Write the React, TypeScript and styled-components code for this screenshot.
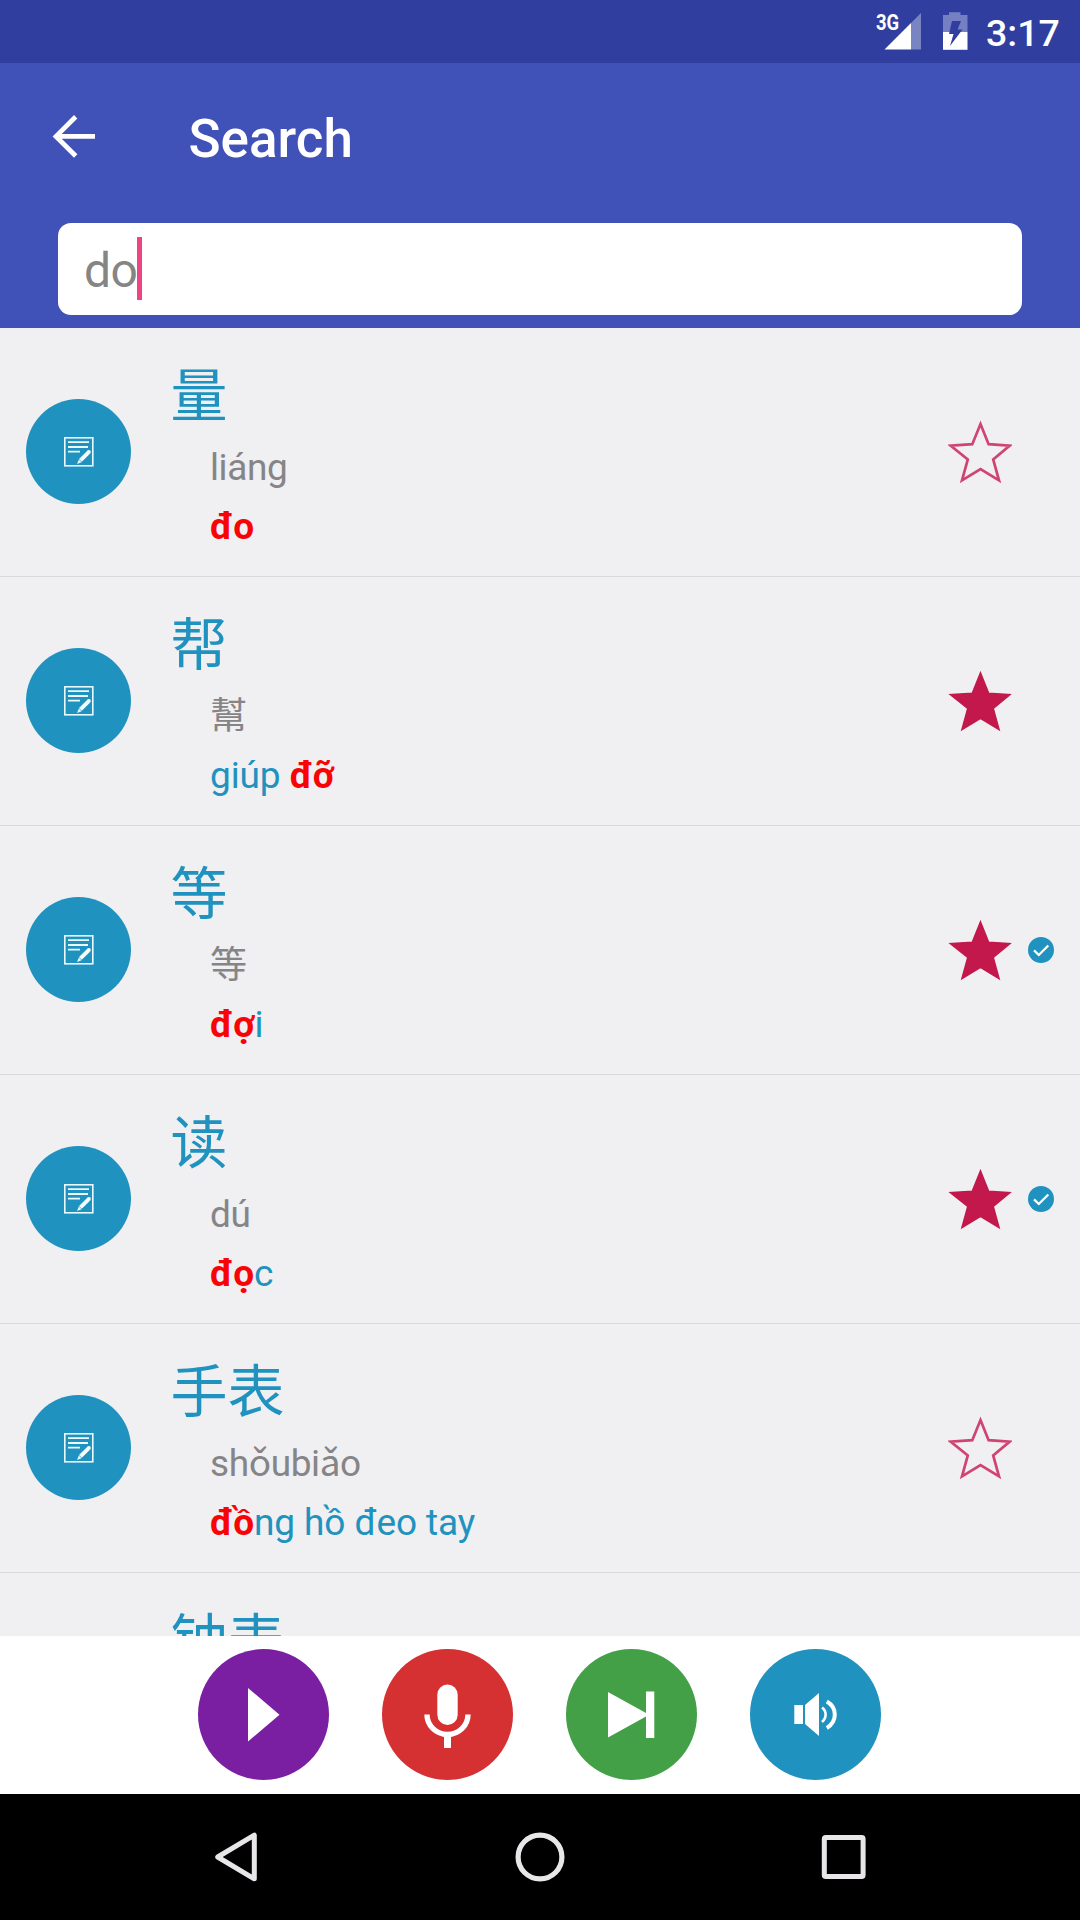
import React from "react";
import styled, { createGlobalStyle } from "styled-components";

const BLUE = "#2092bf";
const CRIMSON = "#c2184b";

const GlobalStyle = createGlobalStyle`
  * { box-sizing: border-box; }
  body { margin: 0; background: #000; }
`;

const Screen = styled.div`
  width: 1080px;
  height: 1920px;
  display: flex;
  flex-direction: column;
  overflow: hidden;
  background: #f0eff1;
  font-family: Roboto, "Noto Sans CJK SC", sans-serif;
`;

const StatusBar = styled.div`
  flex: none;
  height: 63px;
  display: flex;
  align-items: flex-start;
  justify-content: flex-end;
  padding: 12px 21px 0 0;
  background: #303f9f;
  color: #fff;
`;

const Network = styled.span`
  width: 23px;
  margin-right: -15px;
  font-size: 22.5px;
  font-weight: 700;
  line-height: 20px;
  transform: scaleX(0.82);
  transform-origin: 0 0;
`;

const BatteryIcon = styled.svg`
  margin: 0 18px 0 21px;
`;

const Clock = styled.span`
  width: 73px;
  font-size: 37.5px;
  font-weight: 500;
  line-height: 43px;
`;

const Header = styled.header`
  flex: none;
  height: 265px;
  background: #4051b7;
`;

const Toolbar = styled.div`
  height: 160px;
  display: flex;
  align-items: center;
  padding: 0 0 15px 52px;
`;

const Title = styled.h1`
  margin: 6px 0 0 92.5px;
  color: #fff;
  font-size: 53px;
  line-height: 60px;
  font-weight: 500;
`;

const SearchField = styled.div`
  height: 92px;
  margin: 0 58px;
  padding: 0 0 0 26px;
  display: flex;
  align-items: center;
  border-radius: 13px;
  background: #fff;
  color: #858585;
  font-size: 48px;
  letter-spacing: -0.5px;
  line-height: 60px;
`;

const Query = styled.span`
  padding-top: 4px;
`;

const Caret = styled.i`
  width: 5px;
  height: 63px;
  margin-bottom: 1px;
  background: #ee4484;
`;

const List = styled.main`
  flex: none;
  height: 1308px;
  overflow: hidden;
`;

const Row = styled.section`
  height: 249px;
  display: flex;
  align-items: center;
  padding: 0 0 1px 26px;
  border-bottom: 1px solid #d9d8da;
`;

const Circle = styled.span<{ $size: number; $color: string }>`
  flex: none;
  width: ${(p) => p.$size}px;
  height: ${(p) => p.$size}px;
  display: flex;
  align-items: center;
  justify-content: center;
  border-radius: 50%;
  background: ${(p) => p.$color};
`;

const Word = styled.div`
  flex: 1;
  align-self: flex-start;
  padding: 23px 0 0 39.5px;
`;

const Hanzi = styled.div`
  height: 87px;
  font-family: "Noto Sans CJK SC", sans-serif;
  font-size: 57px;
  line-height: 80px;
  color: ${BLUE};
`;

const Line = styled.div<{ $color: string; $spacing: number }>`
  height: 59px;
  padding-left: 39.5px;
  font-size: 37px;
  letter-spacing: ${(p) => p.$spacing}px;
  line-height: 59px;
  color: ${(p) => p.$color};
`;

const Match = styled.b`
  color: #f80406;
  font-weight: 700;
`;

const Marks = styled.div`
  width: 132px;
  display: flex;
  align-items: center;
`;

const CheckSlot = styled.span`
  display: flex;
  margin-left: 16px;
`;

const Player = styled.footer`
  flex: none;
  height: 158px;
  display: flex;
  gap: 53px;
  padding: 13px 0 0 198px;
  background: #fff;
`;

const NavBar = styled.nav`
  flex: none;
  height: 126px;
  display: flex;
  align-items: center;
  justify-content: space-between;
  padding: 0 213px;
  background: #000;
`;

const NoteIcon = () => (
  <svg width="30" height="30" viewBox="0 0 30 30">
    <rect x="0.8" y="0.8" width="28" height="28" fill="none" stroke="#e9fbff" strokeWidth="1.6" />
    <path d="M4 5.2H25M4 10H24M4 14.7H16" stroke="#e9fbff" strokeWidth="1.8" />
    <path d="M16.4 23.4L24.3 15.6" stroke="#f4ffff" strokeWidth="4" />
    <circle cx="24.8" cy="15" r="2" fill="#f4ffff" />
    <path d="M13 27L14.9 22.6L17.6 25.2Z" fill="#e9fbff" />
  </svg>
);

const Star = ({ filled }: { filled: boolean }) => (
  <svg width="64" height="64" viewBox="0 0 64 64">
    <path
      d="M32.5 4L40.6 24.2L61.8 25.6L45.2 39.4L51 60.4L32.5 49.2L14 60.4L19.8 39.4L2.5 25.6L24.3 24.2Z"
      fill={filled ? CRIMSON : "none"}
      stroke={filled ? CRIMSON : "#cf4470"}
      strokeWidth={filled ? 1.6 : 2.7}
    />
  </svg>
);

const Check = () => (
  <svg width="26" height="26" viewBox="0 0 26 26">
    <circle cx="13" cy="13" r="13" fill={BLUE} />
    <path d="M6 13.4L10.8 18L20.3 8.5" fill="none" stroke="#fff" strokeWidth="2.3" />
  </svg>
);

type Entry = {
  hanzi: string;
  reading: string;
  before?: string;
  match?: string;
  after?: string;
  starred?: boolean;
  learned?: boolean;
};

const entries: Entry[] = [
  { hanzi: "量", reading: "liáng", match: "đo" },
  { hanzi: "帮", reading: "幫", before: "giúp ", match: "đỡ", starred: true },
  { hanzi: "等", reading: "等", match: "đợ", after: "i", starred: true, learned: true },
  { hanzi: "读", reading: "dú", match: "đọ", after: "c", starred: true, learned: true },
  { hanzi: "手表", reading: "shǒubiǎo", match: "đồ", after: "ng hồ đeo tay" },
];

export default function App() {
  return (
    <>
      <GlobalStyle />
      <Screen>
        <StatusBar>
          <Network>3G</Network>
          <svg width="37" height="38" viewBox="0 0 37 38">
            <path d="M37 1V37.5H27V11Z" fill="#7984c3" />
            <path d="M0.5 37.5L27 11V37.5Z" fill="#fff" />
          </svg>
          <BatteryIcon width="26" height="38" viewBox="0 0 26 38">
            <path d="M1 3H7V0.3H18.5V3H25.5V20H1Z" fill="#7480c1" />
            <path d="M1 20H25.5V37.8H1Z" fill="#fff" />
            <path d="M10 9H19L15.5 17.5H20.5L8 34L11.5 22H7Z" fill="#303f9f" />
          </BatteryIcon>
          <Clock>3:17</Clock>
        </StatusBar>
        <Header>
          <Toolbar>
            <svg width="44" height="44" viewBox="0 0 44 44">
              <path d="M43 22.4H5M23.7 2.8L4 22.4L23.7 42" fill="none" stroke="#fff" strokeWidth="4.8" />
            </svg>
            <Title>Search</Title>
          </Toolbar>
          <SearchField>
            <Query>do</Query>
            <Caret />
          </SearchField>
        </Header>
        <List>
          {entries.map((e) => (
            <Row key={e.hanzi}>
              <Circle $size={105} $color={BLUE}>
                <NoteIcon />
              </Circle>
              <Word>
                <Hanzi>{e.hanzi}</Hanzi>
                <Line $color="#858587" $spacing={-0.4}>
                  {e.reading}
                </Line>
                <Line $color={BLUE} $spacing={-0.1}>
                  {e.before}
                  <Match>{e.match}</Match>
                  {e.after}
                </Line>
              </Word>
              <Marks>
                <Star filled={!!e.starred} />
                {e.learned && (
                  <CheckSlot>
                    <Check />
                  </CheckSlot>
                )}
              </Marks>
            </Row>
          ))}
          <Row>
            <Circle $size={105} $color="transparent" />
            <Word>
              <Hanzi>钟表</Hanzi>
            </Word>
          </Row>
        </List>
        <Player>
          <Circle $size={131} $color="#7b1fa2">
            <svg width="131" height="131" viewBox="0 0 131 131">
              <path d="M50 39L81.5 65.8L50 92.5Z" fill="#fff" />
            </svg>
          </Circle>
          <Circle $size={131} $color="#d53032">
            <svg width="131" height="131" viewBox="0 0 131 131">
              <rect x="55.3" y="35.5" width="20.4" height="40.5" rx="10.2" fill="#fff" />
              <path d="M45 65.5A20.5 20 0 0 0 86 65.5" fill="none" stroke="#fff" strokeWidth="5.4" />
              <path d="M65.5 84V99" stroke="#fff" strokeWidth="7" />
            </svg>
          </Circle>
          <Circle $size={131} $color="#43a047">
            <svg width="131" height="131" viewBox="0 0 131 131">
              <path d="M42 43L80 64V42.5H88.3V89H80V67.5L42 88.5Z" fill="#fff" />
            </svg>
          </Circle>
          <Circle $size={131} $color={BLUE}>
            <svg width="131" height="131" viewBox="0 0 131 131">
              <path d="M44.3 56H53V75H44.3ZM55 56L69 44V87L55 75Z" fill="#fff" />
              <path d="M72 58.6Q75.6 61 75.6 65.5Q75.6 70 72 73" fill="none" stroke="#fff" strokeWidth="2.6" />
              <path d="M76.8 52.5Q84.8 57 84.8 65.5Q84.8 74 76.8 79" fill="none" stroke="#fff" strokeWidth="4" />
            </svg>
          </Circle>
        </Player>
        <NavBar>
          <svg width="46" height="54" viewBox="0 0 46 54">
            <path d="M41.3 5.2V48.8L4.7 27Z" fill="none" stroke="#e8e6e9" strokeWidth="5" strokeLinejoin="round" />
          </svg>
          <svg width="54" height="54" viewBox="0 0 54 54">
            <circle cx="27" cy="27" r="21.9" fill="none" stroke="#e8e6e9" strokeWidth="5.2" />
          </svg>
          <svg width="46" height="54" viewBox="0 0 46 54">
            <rect x="3.3" y="7.6" width="38.8" height="38.8" rx="1.5" fill="none" stroke="#e8e6e9" strokeWidth="5" />
          </svg>
        </NavBar>
      </Screen>
    </>
  );
}
